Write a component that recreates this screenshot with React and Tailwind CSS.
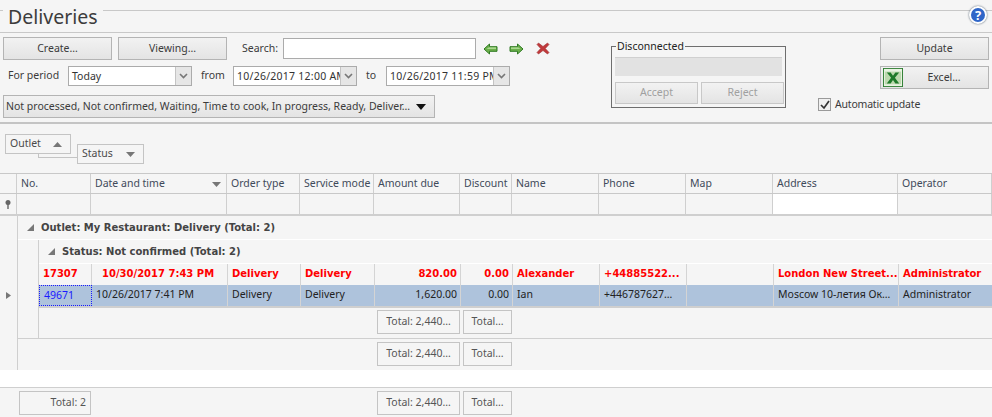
import React from 'react';

const FONT = "font-['Noto_Sans',sans-serif]";
const BOLD = "font-['DejaVu_Sans',sans-serif] font-bold text-[10px]";

// header and filter rows start at the indicator column, data rows are indented
const COLS = 'grid grid-cols-[74px_136px_73px_74px_86px_52px_87px_87px_87px_125px_94px]';
const ROW_COLS = 'grid grid-cols-[53px_136px_73px_74px_86px_52px_87px_87px_87px_125px_94px]';

const HEADERS = ['No.', 'Date and time', 'Order type', 'Service mode', 'Amount due', 'Discount', 'Name', 'Phone', 'Map', 'Address', 'Operator'];

const RED_ROW = ['17307', '10/30/2017 7:43 PM', 'Delivery', 'Delivery', '820.00', '0.00', 'Alexander', '+44885522...', '', 'London New Street...', 'Administrator'];
const BLUE_ROW = ['49671', '10/26/2017 7:41 PM', 'Delivery', 'Delivery', '1,620.00', '0.00', 'Ian', '+446787627…', '', 'Moscow 10-летия Ок…', 'Administrator'];

const Button = ({ children, className = '', disabled }) => (
    <div className={`flex items-center justify-center border bg-gradient-to-b from-[#f2f2f2] to-[#e4e4e4] text-[10.5px] ${disabled ? 'border-[#c8c8c8] text-[#a0a0a0]' : 'border-[#b4b4b4] text-[#3b3b3b]'} ${className}`}>
        {children}
    </div>
);

const Combo = ({ value, className = '', textClass = '' }) => (
    <div className={`flex h-[20px] border border-[#ababab] bg-white ${className}`}>
        <span className={`flex-1 overflow-hidden whitespace-nowrap pl-[3px] text-[10.5px] leading-[18px] text-[#333] ${textClass}`}>{value}</span>
        <span className="flex w-4 shrink-0 items-center justify-center border-l border-[#c4c4c4] bg-[#e6e6e6]">
            <svg width="9" height="6" viewBox="0 0 9 6"><path d="M1 1l3.5 3.5L8 1" fill="none" stroke="#777" strokeWidth="1.6" /></svg>
        </span>
    </div>
);

const Arrow = ({ flip }) => (
    <svg width="15" height="12" viewBox="0 0 15 12" className={flip ? '-scale-x-100' : ''}>
        <path d="M1 6L6.5 1v2.700H14v4.600H6.500V11z" fill="#6cb04c" stroke="#2f7a22" strokeWidth="1" />
        <path d="M6 4.600h7v1.200H3.500z" fill="#bfe6a6" />
    </svg>
);

const Total = ({ children, className = '' }) => (
    <div className={`flex h-[24px] items-center border border-[#c4c4c4] text-[10.5px] text-[#555] ${className}`}>{children}</div>
);

const SumChips = () => (
    <div className="flex gap-[3px]">
        <Total className="w-[83px] justify-center">Total: 2,440…</Total>
        <Total className="w-[49px] justify-center">Total…</Total>
    </div>
);

const Toolbar = () => (
    <div className="flex h-[92px] border-t border-b-[2px] border-t-[#c8c8c8] border-b-[#c4c4c4]">
        <div className="flex w-[611px] flex-col pl-[3px] pt-1">
            <div className="flex items-center">
                <Button className="h-[23px] w-[109px]">Create…</Button>
                <Button className="ml-[6px] h-[23px] w-[109px]">Viewing…</Button>
                <span className="ml-[15px] w-[41px] text-[10.5px] text-[#3b3b3b]">Search:</span>
                <div className="h-[21px] w-[193px] border border-[#ababab] bg-white" />
                <div className="ml-[7px] flex items-center gap-[11px]">
                    <Arrow />
                    <Arrow flip />
                    <svg width="14" height="13" viewBox="0 0 14 13" className="ml-px">
                        <path d="M1 2.500L2.500 1 7 4.500 11.500 1 13 2.500 9.300 6.500 13 10.500 11.500 12 7 8.500 2.500 12 1 10.500 4.700 6.500z" fill="#c0393b" stroke="#a03033" strokeWidth=".6" />
                    </svg>
                </div>
            </div>
            <div className="mt-[6px] flex items-center text-[10.5px] text-[#3b3b3b]">
                <span className="ml-[5px] w-[60px]">For period</span>
                <Combo value="Today" className="w-[124px]" />
                <span className="ml-[9px] w-[32px]">from</span>
                <Combo value="10/26/2017 12:00 AM" className="w-[124px]" textClass="tracking-[0.25px]" />
                <span className="ml-[9px] w-[20px]">to</span>
                <Combo value="10/26/2017 11:59 PM" className="w-[124px]" textClass="tracking-[0.25px]" />
            </div>
            <Button className="mt-[9px] h-[23px] w-[432px] !justify-start gap-[6px] pl-[2px]">
                <span className="whitespace-nowrap">Not processed, Not confirmed, Waiting, Time to cook, In progress, Ready, Deliver…</span>
                <svg width="10" height="6" viewBox="0 0 10 6" className="shrink-0"><path d="M0 0h10L5 6z" fill="#111" /></svg>
            </Button>
        </div>

        <div className="relative mt-[13px] h-[62px] w-[175px] border border-[#6e6e6e] pl-[3px] pt-[10px]">
            <span className="absolute -top-[8px] left-[4px] bg-[#f5f5f5] px-[1px] text-[10.5px] leading-[14px] text-[#222]">Disconnected</span>
            <div className="h-[19px] w-[167px] border-t border-[#d0d0d0] bg-[#e2e2e2]" />
            <div className="mt-[6px] flex gap-[3px]">
                <Button disabled className="h-[22px] w-[83px]">Accept</Button>
                <Button disabled className="h-[22px] w-[83px]">Reject</Button>
            </div>
        </div>

        <div className="ml-[32px] flex w-[174px] flex-col items-end pr-[3px] pt-1">
            <Button className="h-[23px] w-[109px]">Update</Button>
            <Button className="relative mt-[6px] h-[23px] w-[109px] pl-[19px]">
                <svg width="20" height="19" viewBox="0 0 21 21" preserveAspectRatio="none" className="absolute left-[2px] top-[1px]">
                    <rect x=".5" y=".5" width="20" height="20" fill="#e9f3e2" stroke="#2f7d32" />
                    <rect x="2" y="4" width="17" height="14" fill="#bcd9ae" />
                    <path d="M4 5h4l2.500 3.600L13 5h4l-4.500 5.800L17 17h-4l-2.500-3.800L8 17H4l4.500-6.200z" fill="#1f7a2a" />
                </svg>
                Excel…
            </Button>
            <div className="mt-[9px] flex w-full items-center gap-[4px] text-[10.5px] leading-[13px] tracking-[-0.2px] text-[#3b3b3b]">
                <span className="flex h-[13px] w-[13px] items-center justify-center border border-[#9a9a9a] bg-[#f0f0f0]">
                    <svg width="10" height="10" viewBox="0 0 10 10"><path d="M1 5l3 3 5-7" fill="none" stroke="#333" strokeWidth="1.7" /></svg>
                </span>
                Automatic update
            </div>
        </div>
    </div>
);

const GroupPanel = () => (
    <div className="h-[49px] pl-[5px] pt-[10px] text-[10.5px] text-[#4a4a4a]">
        <div className="relative">
            <div className="relative z-10 flex h-[20px] w-[66px] items-center justify-between border border-[#c4c4c4] bg-[#f5f5f5] pl-1 pr-2">
                Outlet
                <svg width="9" height="5" viewBox="0 0 9 5"><path d="M0 5h9L4.500 0z" fill="#777" /></svg>
            </div>
            <div className="absolute left-[33px] top-[19px] h-[5px] w-[40px] border-b border-l border-[#c4c4c4]" />
            <div className="relative z-10 ml-[72px] -mt-[10px] flex h-[20px] w-[67px] items-center justify-between border border-[#c4c4c4] bg-[#f5f5f5] pl-1 pr-2">
                Status
                <svg width="9" height="5" viewBox="0 0 9 5"><path d="M0 0h9L4.500 5z" fill="#777" /></svg>
            </div>
        </div>
    </div>
);

const DataRow = ({ cells, selected }) => (
    <div className={`${ROW_COLS} h-[21px] ${selected ? 'bg-[#aec3dc] text-[10.5px] leading-[19px] text-[#222]' : `${BOLD} leading-[20px] text-[#ff0000]`}`}>
        {cells.map((c, i) => {
            const right = i === 4 || i === 5;
            const focused = i === 0 && selected;
            return (
                <div
                    key={i}
                    className={`overflow-hidden whitespace-nowrap border-r ${right ? 'pr-[3px] text-right' : 'pl-[4px]'} ${i === 1 && !selected ? '!pl-[10px]' : ''} ${focused ? 'border border-dotted !border-[#1a1aff] text-[#1a1aff]' : 'border-[#d4d4d4]'}`}
                >
                    {c}
                </div>
            );
        })}
    </div>
);

const Triangle = () => (
    <svg width="7" height="7" viewBox="0 0 7 7" className="mr-[7px]"><path d="M7 0v7H0z" fill="#777" /></svg>
);

export default function App() {
    return (
        <div className={`${FONT} h-[417px] w-[992px] overflow-hidden bg-[#f5f5f5]`}>
            {/* Title */}
            <div className="relative h-[32px]">
                <div className="absolute left-0 right-0 top-[10px] h-px bg-[#c8c8c8]" />
                <h1 className="absolute left-[3px] top-1 bg-[#f5f5f5] px-[5px] text-[19.5px] leading-[26px] text-[#3c3c3c]">Deliveries</h1>
                <div className="absolute right-[5px] top-[6px] flex h-[18px] w-[18px] items-center justify-center rounded-full border-2 border-white bg-[#2f66c8] text-[13px] font-bold leading-none text-white shadow-[0_0_2px_#456]">?</div>
            </div>

            <Toolbar />
            <GroupPanel />

            {/* Grid */}
            <div className="flex h-[197px] flex-col">
                <div className="flex h-[21px] border-y border-[#c8c8c8] text-[10.5px] text-[#3f4a5a]">
                    <div className="w-[18px] border-r border-[#cfcfcf]" />
                    <div className={COLS}>
                        {HEADERS.map((h, i) => (
                            <div key={h} className="relative overflow-hidden whitespace-nowrap border-r border-[#cfcfcf] pl-[4px] leading-[19px]">
                                {h}
                                {i === 1 && (
                                    <svg width="9" height="5" viewBox="0 0 9 5" className="absolute right-[5px] top-[8px]"><path d="M0 0h9L4.500 5z" fill="#777" /></svg>
                                )}
                            </div>
                        ))}
                    </div>
                </div>
                <div className="flex h-[22px] border-b-2 border-[#cfcfcf]">
                    <div className="flex w-[18px] items-center justify-center border-r border-[#cfcfcf]">
                        <svg width="6" height="9" viewBox="0 0 6 9"><circle cx="3" cy="2.500" r="2.500" fill="#666" /><path d="M2.300 4h1.400v5H2.300z" fill="#666" /></svg>
                    </div>
                    <div className={COLS}>
                        {HEADERS.map((h, i) => (
                            <div key={h} className={`border-r border-[#cfcfcf] ${i === 9 ? 'bg-white' : ''}`} />
                        ))}
                    </div>
                </div>

                <div className="flex min-h-0 flex-1">
                    {/* row indicator */}
                    <div className="flex w-[18px] shrink-0 flex-col items-center border-r border-[#cfcfcf] pt-[76px]">
                        <svg width="5" height="7" viewBox="0 0 5 7"><path d="M0 0l5 3.500L0 7z" fill="#777" /></svg>
                    </div>
                    <div className="min-w-0 flex-1">
                        <div className={`${BOLD} flex h-[24px] items-center border-b border-white pl-[9px] text-[#444]`}>
                            <Triangle />
                            <span>Outlet: My Restaurant: Delivery (Total: 2)</span>
                        </div>
                        <div className="ml-[20px] flex flex-col border-l border-[#cfcfcf]">
                            <div className={`${BOLD} flex h-[24px] items-center border-b border-white pl-[9px] text-[#444]`}>
                                <Triangle />
                                <span>Status: Not confirmed (Total: 2)</span>
                            </div>
                            <DataRow cells={RED_ROW} />
                            <DataRow cells={BLUE_ROW} selected />
                            <div className="flex h-[32px] justify-end border-t-2 border-[#cfcfcf] pr-[480px] pt-[2px]">
                                <SumChips />
                            </div>
                        </div>
                        <div className="flex h-[32px] justify-end border-t border-[#cfcfcf] pr-[480px] pt-[3px]">
                            <SumChips />
                        </div>
                    </div>
                </div>
            </div>

            {/* Grand totals */}
            <div className="h-[17px] bg-white" />
            <div className="flex h-[30px] items-start justify-between border-t border-[#cfcfcf] pl-[19px] pr-[480px] pt-[3px]">
                <Total className="w-[72px] justify-end pr-1">Total: 2</Total>
                <SumChips />
            </div>
        </div>
    );
}
